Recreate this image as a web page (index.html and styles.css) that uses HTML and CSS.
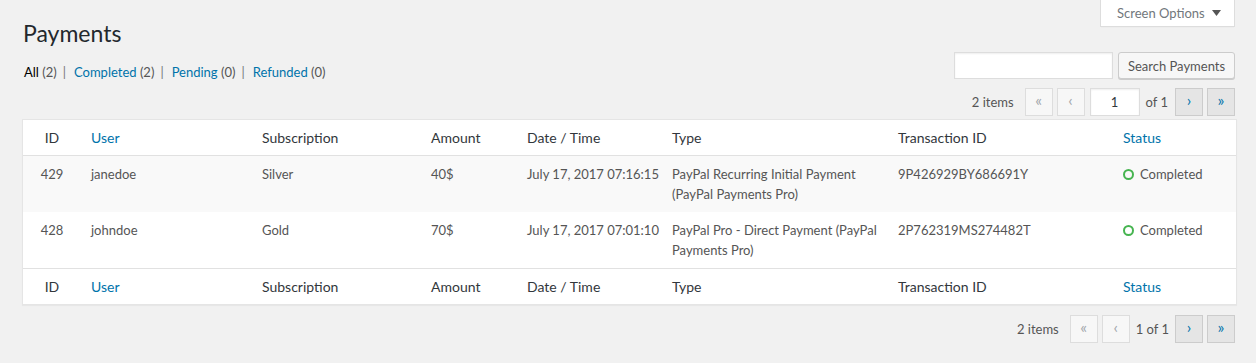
FILE: index.html
```html
<!DOCTYPE html>
<html lang="en">
<head>
    <meta charset="UTF-8">
    <title>Payments</title>
    <link rel="stylesheet" href="styles.css">
</head>

<body>

<div class="wrap">
    <!-- Title and screen options -->
    <div class="top">
        <h1>Payments</h1>
        <button class="screen-options">Screen Options
            <svg width="9" height="6" viewBox="0 0 9 6"><path d="M0 0h9L4.5 6z" fill="#555"/></svg>
        </button>
    </div>

    <!-- Status filters and search -->
    <div class="filter-row">
        <ul class="subsubsub">
            <li><a class="current" href="#">All <span class="count">(2)</span></a><span class="sep">|</span></li>
            <li><a href="#">Completed <span class="count">(2)</span></a><span class="sep">|</span></li>
            <li><a href="#">Pending <span class="count">(0)</span></a><span class="sep">|</span></li>
            <li><a href="#">Refunded <span class="count">(0)</span></a></li>
        </ul>
        <div class="search-box">
            <input type="search" class="search-input">
            <button class="button">Search Payments</button>
        </div>
    </div>

    <div class="tablenav top-nav">
        <span class="displaying-num">2 items</span>
        <span class="nav-btn disabled">&laquo;</span>
        <span class="nav-btn disabled">&lsaquo;</span>
        <input class="current-page" type="text" value="1">
        <span class="total-pages">of 1</span>
        <a class="nav-btn" href="#">&rsaquo;</a>
        <a class="nav-btn" href="#">&raquo;</a>
    </div>

    <table class="list-table">
        <colgroup>
            <col style="width:58px">
            <col style="width:171px">
            <col style="width:169px">
            <col style="width:96px">
            <col style="width:145px">
            <col style="width:226px">
            <col style="width:225px">
            <col style="width:123px">
        </colgroup>
        <thead>
            <tr>
                <th class="col-id">ID</th>
                <th><a href="#">User</a></th>
                <th>Subscription</th>
                <th>Amount</th>
                <th>Date / Time</th>
                <th>Type</th>
                <th>Transaction ID</th>
                <th><a href="#">Status</a></th>
            </tr>
        </thead>
        <tbody id="payments-list">
            <!-- rows inserted by script -->
        </tbody>
        <tfoot>
            <tr>
                <th class="col-id">ID</th>
                <th><a href="#">User</a></th>
                <th>Subscription</th>
                <th>Amount</th>
                <th>Date / Time</th>
                <th>Type</th>
                <th>Transaction ID</th>
                <th><a href="#">Status</a></th>
            </tr>
        </tfoot>
    </table>

    <div class="tablenav bottom-nav">
        <span class="displaying-num">2 items</span>
        <span class="nav-btn disabled">&laquo;</span>
        <span class="nav-btn disabled">&lsaquo;</span>
        <span class="paging-text">1 of 1</span>
        <a class="nav-btn" href="#">&rsaquo;</a>
        <a class="nav-btn" href="#">&raquo;</a>
    </div>
</div>

<script>
    // Payment data
    const payments = [
        { id: 429, user: "janedoe", plan: "Silver", amount: "40$", date: "July 17, 2017 07:16:15",
          type: "PayPal Recurring Initial Payment (PayPal Payments Pro)", txn: "9P426929BY686691Y", status: "Completed" },
        { id: 428, user: "johndoe", plan: "Gold", amount: "70$", date: "July 17, 2017 07:01:10",
          type: "PayPal Pro - Direct Payment (PayPal Payments Pro)", txn: "2P762319MS274482T", status: "Completed" }
    ];

    const list = document.getElementById('payments-list');
    payments.forEach(p => {
        const row = document.createElement('tr');
        row.innerHTML = `
            <td class="col-id">${p.id}</td>
            <td>${p.user}</td>
            <td>${p.plan}</td>
            <td>${p.amount}</td>
            <td class="col-date">${p.date}</td>
            <td>${p.type}</td>
            <td>${p.txn}</td>
            <td><span class="status-dot"></span>${p.status}</td>
        `;
        list.appendChild(row);
    });
</script>

</body>
</html>
```

FILE: styles.css
```css
body {
    margin: 0;
    background-color: #f1f1f1;
    color: #444;
    font-family: Lato, "Open Sans", sans-serif;
    font-size: 13px;
    line-height: 1.4em;
}

a {
    color: #0073aa;
    text-decoration: none;
}

.wrap {
    padding: 0 21px 0 22px;
}

.top {
    display: flex;
    justify-content: space-between;
    align-items: flex-start;
}

h1 {
    margin: 0;
    padding: 19px 0 4px 1px;
    font-size: 23px;
    font-weight: 400;
    line-height: 29px;
    color: #23282d;
}

.screen-options {
    display: flex;
    align-items: center;
    gap: 7px;
    width: 135px;
    height: 27px;
    padding: 0 0 0 16px;
    background: #fff;
    border: 1px solid #ddd;
    border-top: none;
    box-shadow: 0 1px 1px -1px rgba(0, 0, 0, 0.1);
    font-family: inherit;
    font-size: 13px;
    color: #72777c;
}

.filter-row {
    display: flex;
    justify-content: space-between;
    align-items: flex-start;
}

.subsubsub {
    display: flex;
    margin: 7px 0 0 2px;
    padding: 0;
    list-style: none;
    line-height: 26px;
    color: #666;
}

.subsubsub .sep {
    margin: 0 8px 0 6px;
    color: #777;
}

.subsubsub a.current {
    color: #000;
}

.subsubsub .count {
    color: #555;
}

.search-box {
    display: flex;
    gap: 5px;
}

.search-input {
    box-sizing: border-box;
    width: 159px;
    height: 27px;
    margin: 0;
    border: 1px solid #ddd;
    box-shadow: inset 0 1px 2px rgba(0, 0, 0, 0.07);
    background: #fff;
}

.button {
    box-sizing: border-box;
    width: 117px;
    height: 27px;
    padding: 0;
    background: #f7f7f7;
    border: 1px solid #ccc;
    border-radius: 3px;
    box-shadow: 0 1px 0 #ccc;
    font-family: inherit;
    font-size: 13px;
    white-space: nowrap;
    color: #555;
}

.tablenav {
    display: flex;
    justify-content: flex-end;
    align-items: center;
    gap: 4px;
    height: 28px;
}

.top-nav {
    margin: 3px 0 3px;
}

.bottom-nav {
    margin-top: 10px;
}

.displaying-num {
    margin-right: 7px;
    color: #555;
}

.nav-btn {
    box-sizing: border-box;
    display: flex;
    justify-content: center;
    align-items: center;
    width: 28px;
    height: 28px;
    padding-bottom: 3px;
    background: #e5e5e5;
    border: 1px solid #ccc;
    font-size: 16px;
    color: #0073aa;
}

.nav-btn.disabled {
    background: #f7f7f7;
    border-color: #ddd;
    color: #a0a5aa;
}

.current-page {
    box-sizing: border-box;
    width: 50px;
    height: 28px;
    margin: 0 0 0 1px;
    border: 1px solid #ddd;
    box-shadow: inset 0 1px 2px rgba(0, 0, 0, 0.07);
    text-align: center;
    font-family: inherit;
    font-size: 13px;
    color: #32373c;
}

.total-pages {
    margin: 0 3px 0 2px;
    color: #555;
}

.paging-text {
    margin: 0 2px;
    color: #555;
}

.list-table {
    width: 100%;
    table-layout: fixed;
    border-spacing: 0;
    background: #fff;
    border: 1px solid #e5e5e5;
    box-shadow: 0 1px 1px rgba(0, 0, 0, 0.04);
}

.list-table th {
    padding: 8px 10px;
    font-size: 14px;
    font-weight: 400;
    line-height: 19px;
    text-align: left;
    color: #32373c;
}

.list-table thead th {
    border-bottom: 1px solid #e1e1e1;
}

.list-table tfoot th {
    border-top: 1px solid #e1e1e1;
}

.list-table td {
    padding: 8px 10px;
    line-height: 20px;
    vertical-align: top;
    color: #555;
}

.list-table td.col-date {
    white-space: nowrap;
}

.list-table tbody tr:nth-child(odd) {
    background: #f9f9f9;
}

.list-table .col-id {
    text-align: center;
}

.status-dot {
    display: inline-block;
    box-sizing: border-box;
    width: 11px;
    height: 11px;
    margin-right: 6px;
    border: 2px solid #46b450;
    border-radius: 50%;
    vertical-align: -1px;
}
```
